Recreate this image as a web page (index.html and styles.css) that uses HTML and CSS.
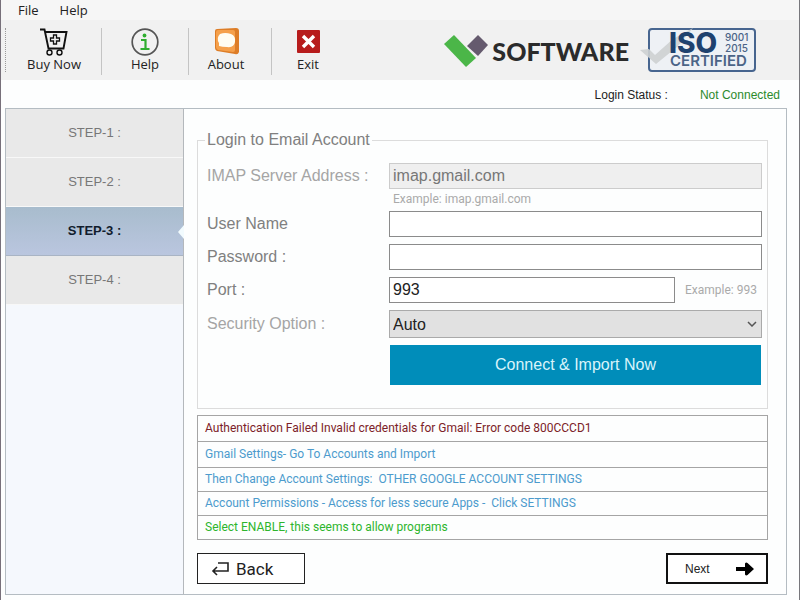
FILE: index.html
```
<!DOCTYPE html>
<html lang="en">

<head>
    <meta charset="utf-8">
    <title>Email Import</title>
    <link rel="stylesheet" href="styles.css">
</head>

<body>
    <nav class="menu-bar">
        <button type="button">File</button>
        <button type="button">Help</button>
    </nav>

    <header class="toolbar">
        <div class="grip"></div>
        <button type="button" class="tool tool-buy">
            <svg width="28" height="28" viewBox="0 0 28 28" fill="none" stroke="#111" stroke-width="1.9">
                <path d="M0 1.500h4.500L8.500 20.500h15L26.500 4H5" />
                <path d="M13.500 7h3v3h3v3h-3v3h-3v-3h-3v-3h3z" stroke-width="1.300" />
                <circle cx="9.500" cy="24.500" r="2.500" stroke-width="1.400" />
                <circle cx="19.500" cy="24.500" r="2.500" stroke-width="1.400" />
            </svg>
            Buy Now
        </button>
        <div class="separator"></div>
        <button type="button" class="tool tool-help">
            <svg width="28" height="28" viewBox="0 0 28 28" fill="none">
                <circle cx="14" cy="14" r="12.800" stroke="#555" stroke-width="1.700" />
                <circle cx="13.500" cy="7.500" r="1.900" fill="#2fae2f" />
                <path d="M10 12h4.500v9M9.500 21h9" stroke="#2fae2f" stroke-width="2.200" />
            </svg>
            Help
        </button>
        <div class="separator"></div>
        <button type="button" class="tool tool-about">
            <svg width="28" height="28" viewBox="0 0 28 28">
                <path d="M3 3Q3 1 5 1L24 0Q27 0 27 3V24Q26 27 23 26L5 23Q3 22 3 20z" fill="#dd7d27" />
                <path d="M4 4Q4 2 6 2L21 2Q23 2 23 4V22Q23 24 21 24L6 22Q4 21 4 19z" fill="#f5a04b" />
                <path d="M8 6Q13 4 19 6Q24 8 23 14Q22 20 15 19Q10 19 7 18L7 15Q4 10 8 6z" fill="#fffdf2" />
            </svg>
            About
        </button>
        <div class="separator"></div>
        <button type="button" class="tool tool-exit">
            <svg width="28" height="28" viewBox="0 0 28 28">
                <rect x="3" y="2" width="23" height="23" rx="1" fill="#b71c1c" />
                <path d="M9 8l11 11M20 8L9 19" stroke="#fff" stroke-width="3.400" />
            </svg>
            Exit
        </button>

        <div class="brand">
            <svg width="46" height="34" viewBox="0 0 46 34">
                <path d="M1 10L11 1L33 24L23 33z" fill="#4bb648" />
                <path d="M24 12L35 1L45 11L35 22z" fill="#655a6e" />
            </svg>
            <span class="brand-name">SOFTWARE</span>
            <svg class="iso" width="118" height="46" viewBox="0 0 118 46" role="img" aria-label="ISO 9001 2015 Certified">
                <rect x="10" y="1" width="106" height="42" rx="3" fill="#eef1f5" stroke="#47658f" stroke-width="2" />
                <path d="M1 22l9-1 6 6L34 11 54 0 38 19 17 36z" fill="#cdd0d2" opacity="0.900" />
                <text x="30" y="25" class="iso-main">ISO</text>
                <text x="86" y="13" class="iso-year">9001</text>
                <text x="86" y="24" class="iso-year">2015</text>
                <text x="31" y="38" class="iso-sub">CERTIFIED</text>
            </svg>
        </div>
    </header>

    <div class="status-bar">
        <span>Login Status :</span>
        <span class="status-value">Not Connected</span>
    </div>

    <main class="panel">
        <ol class="steps">
            <li>STEP-1 :</li>
            <li>STEP-2 :</li>
            <li class="active">STEP-3 :</li>
            <li>STEP-4 :</li>
        </ol>

        <form class="content">
            <fieldset class="login">
                <legend>Login to Email Account</legend>
                <div class="rows">
                    <label for="server" class="dim">IMAP Server Address :</label>
                    <input type="text" id="server" value="imap.gmail.com" disabled>
                    <span class="hint hint-server">Example: imap.gmail.com</span>

                    <label for="user">User Name</label>
                    <input type="text" id="user">

                    <label for="password">Password :</label>
                    <input type="password" id="password">

                    <label for="port">Port :</label>
                    <div class="port">
                        <input type="text" id="port" value="993">
                        <span class="hint">Example: 993</span>
                    </div>

                    <label for="security" class="dim">Security Option :</label>
                    <div class="select-box">
                        <select id="security">
                            <option>Auto</option>
                        </select>
                        <svg class="chevron" width="10" height="6" viewBox="0 0 10 6">
                            <path d="M1 1l4 4 4-4" fill="none" stroke="#555" stroke-width="1.500" />
                        </svg>
                    </div>

                    <button type="button" class="connect">Connect &amp; Import Now</button>
                </div>
            </fieldset>

            <ul class="messages">
                <li class="error">Authentication Failed Invalid credentials for Gmail: Error code 800CCCD1</li>
                <li class="first-step">Gmail Settings- Go To Accounts and Import</li>
                <li>Then Change Account Settings:&nbsp; OTHER GOOGLE ACCOUNT SETTINGS</li>
                <li>Account Permissions - Access for less secure Apps -&nbsp; Click SETTINGS</li>
                <li class="success">Select ENABLE, this seems to allow programs</li>
            </ul>

            <div class="actions">
                <button type="button" class="back">
                    <svg width="18" height="14" viewBox="0 0 18 14" fill="none" stroke="#222" stroke-width="1.600">
                        <path d="M7 1h10v8H2M6 5L2 9l4 4" />
                    </svg>
                    Back
                </button>
                <button type="button" class="next">
                    Next
                    <svg width="18" height="14" viewBox="0 0 18 14">
                        <path d="M0 5h9V1.500Q10 0 11.500 1L18 7l-6.500 6Q10 14 9 12.500V9H0z" fill="#000" />
                    </svg>
                </button>
            </div>
        </form>
    </main>
</body>

</html>
```

FILE: styles.css
```
* {
    box-sizing: border-box;
}

body {
    margin: 0;
    min-height: 100vh;
    display: flex;
    flex-direction: column;
    border-left: 1px solid #77707a;
    border-right: 1px solid #77777c;
    background-color: #fdfefe;
    color: #222;
    font-family: "Liberation Sans", Arial, sans-serif;
    font-size: 12px;
}

button,
input,
select {
    font-family: inherit;
}

.menu-bar {
    display: flex;
    gap: 21px;
    height: 20px;
    padding-left: 17px;
    background-color: #f6f6f6;
}

.menu-bar button,
.tool {
    padding: 0;
    border: none;
    background: none;
    color: #222;
    font-family: "Open Sans", sans-serif;
    font-size: 13px;
    line-height: 20px;
}

.toolbar {
    display: flex;
    height: 60px;
    padding: 8px 42px 5px 4px;
    background-color: #f1f1f1;
}

.grip {
    width: 2px;
    height: 44px;
    border-left: 1px dotted #999;
}

.separator {
    width: 1px;
    background-color: #c4c4c4;
}

.tool {
    display: flex;
    flex-direction: column;
    align-items: center;
    line-height: 16px;
}

.tool-buy {
    width: 94px;
}

.tool-help {
    width: 86px;
}

.tool-about {
    width: 74px;
    margin-right: 8px;
}

.tool-exit {
    width: 72px;
}

.brand {
    display: flex;
    align-items: center;
    margin-left: auto;
    height: 46px;
}

.brand-name {
    margin: 0 10px 0 3px;
    color: #2b2b2b;
    font-family: Lato, sans-serif;
    font-size: 25px;
    font-weight: 900;
}

.iso {
    overflow: visible;
    font-family: Inter, sans-serif;
}

.iso-main {
    fill: #1f426f;
    font-size: 28px;
    font-weight: 800;
}

.iso-year {
    fill: #4b6487;
    font-size: 10px;
    font-weight: 500;
}

.iso-sub {
    fill: #4b6487;
    font-size: 15px;
    font-weight: 600;
}

.status-bar {
    display: flex;
    justify-content: flex-end;
    gap: 32px;
    height: 28px;
    padding-right: 19px;
    line-height: 31px;
}

.status-value {
    color: #2c8a2c;
}

.panel {
    flex: 1;
    display: flex;
    margin: 0 12px 5px 4px;
    border: 1px solid #b4bcc2;
}

.steps {
    width: 178px;
    margin: 0;
    padding: 0;
    list-style: none;
    border-right: 1px solid #b4b8bc;
    background-color: #f5f8fd;
}

.steps li {
    height: 49px;
    border-bottom: 1px solid #f8f8f8;
    background-color: #e9e9e9;
    color: #777;
    font-size: 13px;
    line-height: 47px;
    text-align: center;
}

.steps .active {
    position: relative;
    border-bottom-color: #a9b4c4;
    background-image: linear-gradient(#a8bccd, #bac6df);
    color: #111c2c;
    font-weight: bold;
}

/* notch pointing at the current step */
.steps .active::after {
    content: "";
    position: absolute;
    top: 18px;
    right: -1px;
    border: 7px solid transparent;
    border-left-width: 0;
    border-right: 6px solid #f2fbfe;
}

.content {
    flex: 1;
    padding: 23px 18px 0 13px;
}

.login {
    height: 277px;
    margin: 0;
    padding: 0 5px 0 7px;
    border: 1px solid #dcdcdc;
    color: #808080;
    font-size: 16px;
}

.login legend {
    padding: 0 2px;
    line-height: 16px;
}

.rows {
    display: grid;
    grid-template-columns: 182px 1fr;
    row-gap: 7px;
    align-items: center;
    padding: 15px 0 0 2px;
}

.dim {
    color: #a5a5a5;
}

.rows input,
.rows select {
    width: 100%;
    height: 26px;
    padding: 0 3px;
    border: 1px solid #8b8b8b;
    border-radius: 0;
    background-color: #fff;
    color: #222;
    font-size: 16px;
}

.rows input:disabled {
    border-color: #ccc;
    background-color: #efefef;
    color: #777;
}

.hint {
    color: #aaa;
    font-family: Roboto, sans-serif;
    font-size: 12px;
    line-height: 14px;
}

.hint-server {
    grid-column: 2;
    margin: -4px 0 -2px 4px;
}

.port {
    display: flex;
    align-items: center;
    gap: 10px;
}

.port .hint {
    width: 77px;
    flex: none;
}

.select-box {
    position: relative;
}

.rows select {
    display: block;
    height: 28px;
    appearance: none;
    border-color: #aaa;
    background-color: #e1e1e1;
}

.chevron {
    position: absolute;
    top: 11px;
    right: 5px;
    pointer-events: none;
}

.connect {
    grid-column: 2;
    height: 40px;
    margin: 0 1px;
    border: none;
    background-color: #008dba;
    color: #d9f4fb;
    font-size: 16px;
}

.messages {
    margin: 6px 0 13px;
    padding: 0;
    list-style: none;
    border: 1px solid #a5a5a5;
    color: #4c9bcd;
    font-family: Roboto, sans-serif;
}

.messages li {
    padding: 0 7px;
    line-height: 23px;
}

.messages li + li {
    border-top: 1px solid #a5a5a5;
}

.messages .error,
.messages .first-step {
    line-height: 25px;
}

.messages .error {
    color: #7c2228;
}

.messages .success {
    color: #2db52d;
}

.actions {
    display: flex;
    justify-content: space-between;
}

.actions button {
    display: flex;
    align-items: center;
    height: 31px;
    background-color: #fff;
    color: #222;
}

.back {
    gap: 7px;
    width: 108px;
    padding: 0 13px;
    border: 1px solid #222;
    font-family: Roboto, sans-serif;
    font-size: 17px;
}

.next {
    justify-content: space-between;
    width: 102px;
    padding: 0 12px 0 17px;
    border: 2px solid #111;
    font-size: 12px;
}
```
